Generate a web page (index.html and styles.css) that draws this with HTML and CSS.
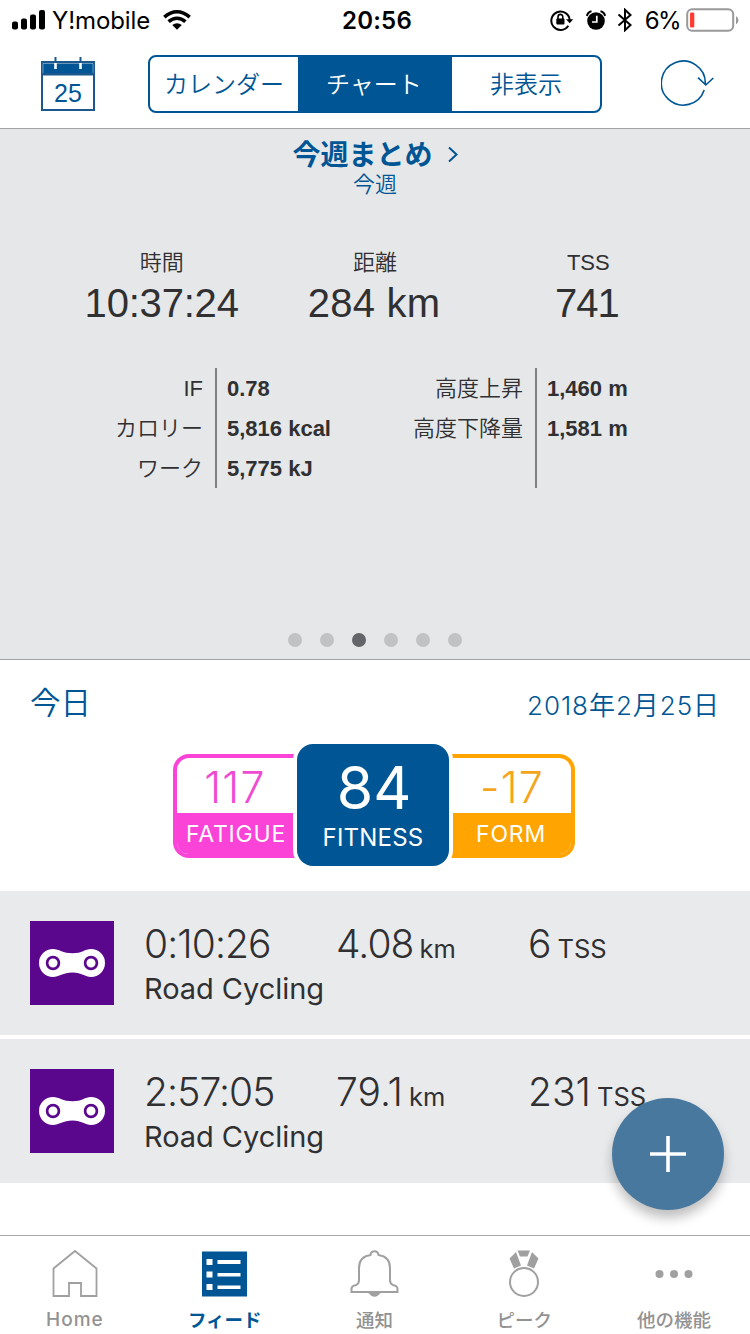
FILE: index.html
```html
<!DOCTYPE html>
<html lang="ja">
<head>
<meta charset="utf-8">
<title>今週まとめ</title>
<link rel="stylesheet" href="styles.css">
</head>
<body>
<div class="app">
  <div class="status">
    <div class="status-left">
      <svg width="34" height="20" viewBox="0 0 34 20"><rect x="0" y="11.5" width="6" height="8" rx="2"/><rect x="9" y="8.500" width="6" height="11" rx="2"/><rect x="18" y="4.500" width="6" height="15" rx="2"/><rect x="27" y="0" width="6" height="19.500" rx="2"/></svg>
      <span class="carrier">Y!mobile</span>
      <svg class="wifi" width="28" height="20" viewBox="0 0 28 20"><g fill="none" stroke="#000" stroke-width="3.600"><path d="M1.300 7.200Q7.500 1.800 14 1.800T26.700 7.200"/><path d="M5.600 11.700Q9.500 8.300 14 8.300T22.400 11.700"/></g><path d="M9.200 15Q14 11.600 18.800 15L14 19.800Z"/></svg>
    </div>
    <span class="clock">20:56</span>
    <div class="status-right">
      <svg width="24" height="22" viewBox="0 0 24 22"><path d="M18.300 16.700A9.200 9.200 0 1 1 19.700 11" fill="none" stroke="#000" stroke-width="2"/><path d="M16 10.200h7.200l-3.500 4z"/><rect x="6.300" y="9.600" width="8.200" height="6" rx="1"/><path d="M8 10V8a2.400 2.600 0 0 1 4.800 0V10" fill="none" stroke="#000" stroke-width="1.600"/></svg>
      <svg class="alarm" width="20" height="20" viewBox="0 0 20 20"><circle cx="10" cy="11" r="8.800"/><path d="M1 6Q1.500 2.300 5.500 1.300M19 6Q18.500 2.300 14.500 1.300" fill="none" stroke="#000" stroke-width="2"/><path d="M10.800 5.800v6.200H6" fill="none" stroke="#fff" stroke-width="1.700"/></svg>
      <svg class="bluetooth" width="16" height="24" viewBox="0 0 16 24"><path d="M1.500 6.500L13.500 17 8 22.200V1.800L13.500 7 1.500 17.500" fill="none" stroke="#000" stroke-width="2"/></svg>
      <span class="percent">6%</span>
      <svg width="54" height="24" viewBox="0 0 54 24"><rect x="1.200" y="1.200" width="46" height="21.500" rx="5" fill="none" stroke="#999" stroke-width="2"/><rect x="4" y="4.500" width="4.300" height="15" rx="1" fill="#ff3b30"/><path d="M50 8.200c3.200 1.400 3.200 6.600 0 8z" fill="#999"/></svg>
    </div>
  </div>

  <div class="header">
    <div class="calendar">
      <svg width="54" height="54" viewBox="0 0 54 54"><rect x="1" y="5" width="52" height="48" fill="#fff" stroke="#1d588c" stroke-width="2"/><rect x="1.500" y="6" width="51" height="11" fill="#005695" stroke="#1d588c"/><path d="M1 17.500h52" stroke="#1d588c" stroke-width="2"/><path d="M2 16V6.500h50V16" fill="none" stroke="#8db5d1" stroke-width=".7"/><path d="M14.500 0v6M39.500 0v6" stroke="#1d588c" stroke-width="2"/><path d="M14.500 6v6M39.500 6v6" stroke="#fff" stroke-width="2.600"/></svg>
      <span class="calendar-day">25</span>
    </div>
    <div class="segments">
      <span class="segment">カレンダー</span><span class="segment segment-on">チャート</span><span class="segment">非表示</span>
    </div>
    <svg class="refresh" width="54" height="46" viewBox="0 0 54 46" fill="none" stroke="#005695" stroke-width="1.600"><path d="M43.200 30A22 22 0 1 1 44.300 24M37 17.700L44.800 25 52.300 18"/></svg>
  </div>

  <section class="summary">
    <h1 class="summary-title"><span>今週まとめ</span><svg width="10" height="17" viewBox="0 0 10 17"><path d="M1 1.500L8.500 8.500 1 15.500" fill="none" stroke="#005695" stroke-width="2"/></svg></h1>
    <div class="summary-sub">今週</div>
    <div class="stats">
      <div class="stat"><div class="stat-label">時間</div><div class="stat-value">10:37:24</div></div>
      <div class="stat"><div class="stat-label">距離</div><div class="stat-value stat-wide">284 km</div></div>
      <div class="stat"><div class="stat-label stat-latin">TSS</div><div class="stat-value stat-tight">741</div></div>
    </div>
    <div class="details">
      <div class="labels"><span class="latin">IF</span><span>カロリー</span><span>ワーク</span></div>
      <div class="values"><span>0.78</span><span>5,816 kcal</span><span>5,775 kJ</span></div>
      <div class="labels"><span>高度上昇</span><span>高度下降量</span></div>
      <div class="values"><span>1,460 m</span><span>1,581 m</span></div>
    </div>
    <div class="dots"><i class="dot"></i><i class="dot"></i><i class="dot dot-on"></i><i class="dot"></i><i class="dot"></i><i class="dot"></i></div>
  </section>

  <section class="today">
    <div class="today-head"><span class="today-name">今日</span><span class="today-date">2018年2月25日</span></div>
    <div class="badges">
      <div class="badge fatigue"><span class="badge-value">117</span><span class="badge-label">FATIGUE</span></div>
      <div class="badge fitness"><span class="badge-value">84</span><span class="badge-label">FITNESS</span></div>
      <div class="badge form"><span class="badge-value">-17</span><span class="badge-label">FORM</span></div>
    </div>
  </section>

  <section class="workouts">
    <div class="workout">
      <svg class="chain" width="84" height="84" viewBox="0 0 84 84"><rect width="84" height="84" fill="#5a068d"/><path d="M23 28C29 28 33 32.300 42.500 32.300S55 28 61 28A14 14 0 0 1 61 56C55 56 52 51.500 42.500 51.500S29 56 23 56A14 14 0 0 1 23 28Z" fill="#fff"/><g fill="#fff" stroke="#5a068d" stroke-width="2.700"><circle cx="23" cy="42" r="5.900"/><circle cx="61" cy="42" r="5.900"/></g></svg>
      <div class="workout-info">
        <div class="metrics"><span class="m-time">0:10:26</span><span class="metric m-dist">4.08<small>km</small></span><span class="metric">6<small>TSS</small></span></div>
        <div class="kind">Road Cycling</div>
      </div>
    </div>
    <div class="workout">
      <svg class="chain" width="84" height="84" viewBox="0 0 84 84"><rect width="84" height="84" fill="#5a068d"/><path d="M23 28C29 28 33 32.300 42.500 32.300S55 28 61 28A14 14 0 0 1 61 56C55 56 52 51.500 42.500 51.500S29 56 23 56A14 14 0 0 1 23 28Z" fill="#fff"/><g fill="#fff" stroke="#5a068d" stroke-width="2.700"><circle cx="23" cy="42" r="5.900"/><circle cx="61" cy="42" r="5.900"/></g></svg>
      <div class="workout-info">
        <div class="metrics"><span class="m-time">2:57:05</span><span class="metric">79.1<small>km</small></span><span class="metric">231<small>TSS</small></span></div>
        <div class="kind">Road Cycling</div>
      </div>
    </div>
  </section>

  <nav class="tabs">
    <div class="tab"><svg width="50" height="50" viewBox="0 0 50 50" fill="none" stroke="#a0a0a0" stroke-width="1.800"><path d="M25 2L46.500 19.500V47H31V34H19V47H3.500V19.500Z"/></svg><span class="tab-latin">Home</span></div>
    <div class="tab tab-on"><svg width="50" height="50" viewBox="0 0 50 50"><rect x="2" y="2.500" width="45" height="45" fill="#005695"/><g fill="#fff"><path d="M6.500 10h6v6h-6zM6.500 22.500h6v6h-6zM6.500 35h6v6h-6zM17.500 11h23v4h-23zM17.500 24h23v3.500h-23zM17.500 36.500h23v3.500h-23z"/></g></svg><span>フィード</span></div>
    <div class="tab"><svg width="50" height="50" viewBox="0 0 50 50" fill="none" stroke="#a0a0a0" stroke-width="2"><path d="M2.500 43V40C2.500 37.500 4.500 36.500 7 36Q10 35 10 31V19C10 11 15 7 21.500 6Q22 2.300 25.500 2.300T29.500 6C36 7 41 11 41 19V31Q41 35 44 36C46.500 36.500 48.500 37.500 48.500 40V43Z"/><path d="M19 43.500Q25.500 52 32 43.500Z" fill="#a0a0a0" stroke="none"/></svg><span>通知</span></div>
    <div class="tab"><svg width="50" height="50" viewBox="0 0 50 50" fill="#a0a0a0"><path d="M18.500 1.500h12.500l-2.500 6H21zM17 3L10.500 9.500 15 19.500l7-3zM33 3l6.500 6.500L35 19.500l-7-3z"/><circle cx="25" cy="33" r="14" fill="none" stroke="#a0a0a0" stroke-width="2"/></svg><span>ピーク</span></div>
    <div class="tab"><svg width="50" height="50" viewBox="0 0 50 50" fill="#a0a0a0"><circle cx="10.500" cy="25" r="4"/><circle cx="25" cy="25" r="4"/><circle cx="39.500" cy="25" r="4"/></svg><span>他の機能</span></div>
  </nav>
  <div class="fab"><svg width="36" height="36" viewBox="0 0 36 36"><path d="M18 0v36M0 18h36" stroke="#fff" stroke-width="3.600"/></svg></div>
</div>
</body>
</html>
```
FILE: styles.css
```css
* { box-sizing: border-box; }
body { margin: 0; background: #fff; color: #303032; font-family: Inter, "Noto Sans CJK JP", sans-serif; }
svg { display: block; flex: none; }
span { white-space: nowrap; }
.app { position: relative; width: 750px; height: 1334px; display: flex; flex-direction: column; overflow: hidden; }

.status { height: 40px; display: grid; grid-template-columns: 1fr auto 1fr; align-items: center; padding: 0 10px 0 12px; color: #000; font-size: 24px; }
.status-left, .status-right { display: flex; align-items: center; }
.status-right { justify-content: flex-end; }
.carrier { margin-left: 6px; letter-spacing: -.1px; }
.wifi { margin-left: 13px; }
.clock { font-weight: 600; letter-spacing: .2px; padding-left: 2px; }
.alarm { margin-left: 12px; }
.bluetooth { margin-left: 11px; }
.percent { margin: 0 6px 0 12px; letter-spacing: -1.6px; }

.header { height: 89px; border-bottom: 1px solid #a2a3a5; display: flex; padding-left: 41px; color: #005695; }
.calendar { position: relative; width: 54px; height: 54px; margin-top: 17px; }
.calendar-day { position: absolute; left: 0; top: 21px; width: 54px; text-align: center; font: 25px/30px "Liberation Sans", sans-serif; }
.segments { width: 454px; height: 58px; margin: 15px 0 0 53px; border: 2px solid #005695; border-radius: 8px; display: flex; overflow: hidden; font: 350 24px/51px "Noto Sans CJK JP", sans-serif; text-align: center; }
.segment { width: 148px; }
.segment-on { width: 154px; background: #005695; color: #fff; padding-right: 2px; }
.refresh { margin: 20px 0 0 59px; }

.summary { height: 531px; background: #e6e7e9; border-bottom: 1px solid #a2a3a5; }
.summary-title { height: 40px; margin: 0; padding: 8px 0 0; display: flex; justify-content: center; align-items: center; gap: 15px; color: #005695; font: 700 28px/32px "Noto Sans CJK JP", sans-serif; }
.summary-title svg { margin-top: 2px; }
.summary-sub { height: 31px; text-align: center; color: #005695; font: 350 22px/27px "Noto Sans CJK JP", sans-serif; }
.stats { display: grid; grid-template-columns: repeat(3, 1fr); padding: 46px 55px 0; text-align: center; }
.stat-label { height: 32px; font: 350 22px/28px "Noto Sans CJK JP", sans-serif; }
.stat-latin { font: 22px/34px "Liberation Sans", sans-serif; }
.stat-value { height: 50px; font: 40px/51px "Liberation Sans", sans-serif; letter-spacing: -.2px; }
.stat-wide { letter-spacing: .2px; padding-right: 2px; }
.stat-tight { letter-spacing: -1px; padding-right: 3px; }
.details { display: grid; grid-template-columns: 215px 122px 198px 215px; height: 120px; margin-top: 40px; }
.labels { display: flex; flex-direction: column; text-align: right; padding-right: 12px; font: 350 22px/36px "Noto Sans CJK JP", sans-serif; }
.labels span { height: 40px; }
.labels .latin { font: 22px/41px "Liberation Sans", sans-serif; }
.values { display: flex; flex-direction: column; border-left: 2px solid #808184; padding-left: 10px; font: 700 22px/41px "Liberation Sans", sans-serif; }
.values span { height: 40px; }
.dots { display: flex; gap: 18px; justify-content: center; margin-top: 145px; }
.dot { width: 14px; height: 14px; border-radius: 50%; background: #c1c2c3; }
.dot-on { background: #636569; }

.today { height: 231px; color: #005695; }
.today-head { height: 84px; padding: 0 31px 0 30px; display: flex; justify-content: space-between; }
.today-name { font: 350 30.500px/82px "Noto Sans CJK JP", sans-serif; }
.today-date { font: 350 26px/91px Inter, "Noto Sans CJK JP", sans-serif; letter-spacing: .95px; margin-right: -1px; }
.badges { display: flex; justify-content: center; align-items: center; height: 122px; padding-right: 2px; }
.badge { width: 122px; height: 104px; display: flex; flex-direction: column; overflow: hidden; text-align: center; }
.badge-label { font-size: 23px; letter-spacing: .8px; color: #fff; line-height: 43px; height: 42px; }
.badge-value { font-size: 43px; line-height: 58px; height: 55px; font-weight: 300; letter-spacing: 1.2px; }
.fatigue { border: 4px solid #fc43d8; border-right: 0; border-radius: 16px 0 0 16px; color: #ef4bd2; margin-top: 2px; }
.fatigue .badge-value { padding-right: 2px; }
.fatigue .badge-label { background: #fc43d8; }
.form { border: 4px solid #ffa400; border-left: 0; border-radius: 0 16px 16px 0; color: #f3a51c; width: 124px; margin-top: 2px; }
.form .badge-value { padding-left: 2px; }
.form .badge-label { background: #ffa400; }
.fitness { position: relative; width: 152px; height: 122px; margin: 0 2px; border-radius: 16px; background: #005695; color: #fff; box-shadow: 0 0 0 4px #fff; }
.fitness .badge-value { height: 74px; font-size: 59px; line-height: 88px; font-weight: 400; letter-spacing: 0; padding-left: 2px; }
.fitness .badge-label { font-size: 24px; letter-spacing: .2px; line-height: 40px; }

.workouts { display: flex; flex-direction: column; gap: 4px; height: 344px; }
.workout { height: 144px; background: #e9eaec; padding: 30px; display: flex; gap: 30px; }
.metrics { display: grid; grid-template-columns: 192px 192px auto; height: 46px; font-size: 39px; line-height: 46px; font-weight: 300; }
.m-time { letter-spacing: -.9px; }
.metric { display: flex; align-items: baseline; gap: 6px; }
.m-dist { letter-spacing: -.9px; }
.metrics small { font-size: 25.500px; font-weight: 400; letter-spacing: 0; }
.kind { font-size: 29px; line-height: 44px; letter-spacing: -.05px; }

.tabs { height: 99px; border-top: 1px solid #a9a9a9; display: grid; grid-template-columns: repeat(5, 1fr); padding-right: 1px; color: #929292; font: 500 18.500px/24px "Noto Sans CJK JP", sans-serif; }
.tab { display: flex; flex-direction: column; align-items: center; padding-top: 13px; gap: 8px; }
.tab-on { color: #005695; font-weight: 700; }
.tab-latin { font-family: Inter, sans-serif; font-size: 19px; letter-spacing: 1px; padding-top: 1px; }
.fab { position: absolute; left: 612px; top: 1098px; width: 112px; height: 112px; border-radius: 50%; background: #48789e; box-shadow: 0 8px 12px rgba(0,0,0,.25); display: flex; align-items: center; justify-content: center; }
```
